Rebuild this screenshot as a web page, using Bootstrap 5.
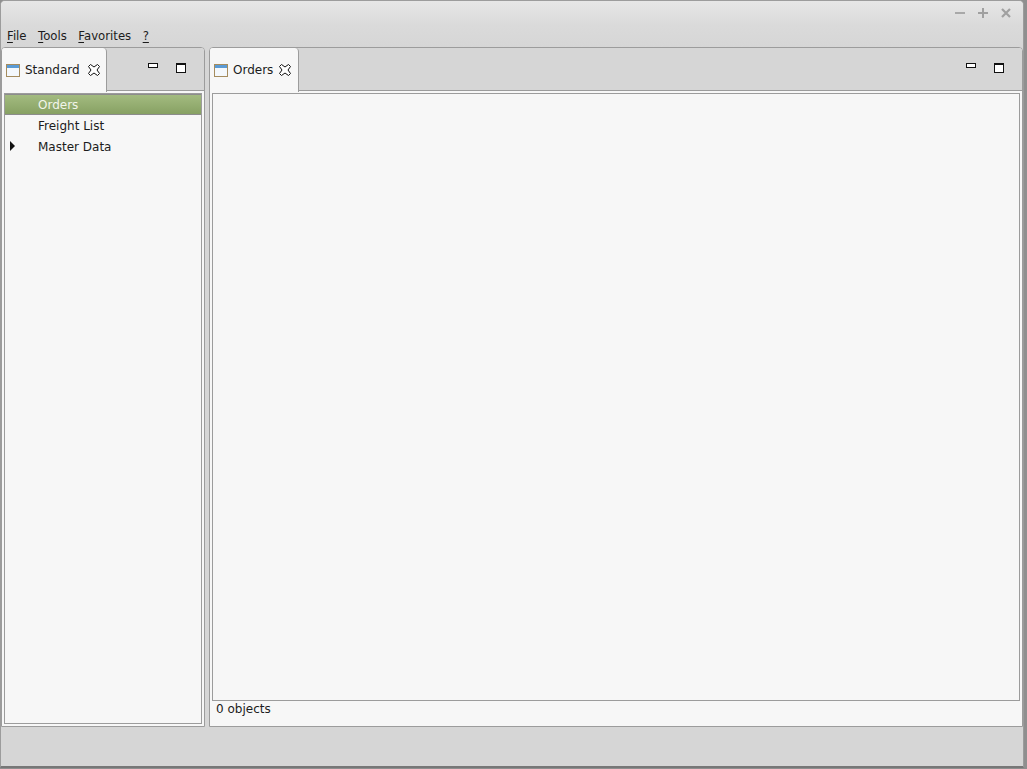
<!DOCTYPE html>
<html lang="en">
<head>
<meta charset="utf-8">
<title>Orders</title>
<link href="https://cdn.jsdelivr.net/npm/bootstrap@5.3.0/dist/css/bootstrap.min.css" rel="stylesheet">
<style>
html,body{height:769px;overflow:hidden}
body{background:#8f8f8f;font-family:"DejaVu Sans",sans-serif;font-size:12px;color:#1c1c1c;line-height:1}
.app-window{width:1024px;height:768px;background:#d6d6d6;border:1px solid #9c9c9c;border-bottom:2px solid #777;border-radius:5px 5px 0 0;overflow:hidden}
.title-strip{height:25px;padding:0 11px 2px 0;gap:11px;background:linear-gradient(#e6e6e6,#dadada)}
.title-strip svg{display:block}
.menu-strip{height:21px;padding:1px 0 0 6px;gap:11.500px;background:linear-gradient(#dadada,#d6d6d6);font-size:11.7px}
.menu-strip u{text-underline-offset:2px}
.work-area{height:680px;gap:4px}
.side-pane{width:204px;flex:none}
.main-pane{width:814px;flex:none}
.pane-box{background:#f7f7f7;border:1px solid #9c9c9c;border-radius:4px 4px 0 0;height:100%;overflow:hidden}
.tab-head{height:43px;background:#d6d6d6;border-bottom:1px solid #9c9c9c}
.tab-item{height:44px;background:#f7f7f7;border-right:1px solid #9c9c9c;border-radius:0 4px 0 0;padding-left:4px;gap:5px}
.tab-item svg{flex:none}
.side-pane .tab-item{width:105px}
.main-pane .tab-item{width:89px}
.tab-close{margin-left:3px}
.main-pane .tab-close{margin-left:1px}
.pane-tools{gap:18px;margin-top:15px}
.side-pane .pane-tools{margin-left:41px}
.main-pane .pane-tools{margin-left:auto;margin-right:18px}
.tool-min{width:10px;height:5px;border:1px solid #111;background:#fff}
.tool-max{width:10px;height:10px;border:1px solid #111;border-top-width:2px;background:#fff}
.tree-box{border:1px solid #9c9c9c;margin:2px 2px 2px 2px;height:632px;background:#f7f7f7}
.tree-row{height:21px;padding-left:33px}
.tree-row.is-selected{background:linear-gradient(#a3bb80,#87a163);color:#f2f5ea;border-top:1px solid #8c8c8c;border-bottom:1px solid #8c8c8c}
.tree-arrow{width:0;height:0;border-left:5px solid #111;border-top:5px solid transparent;border-bottom:5px solid transparent;left:5px;top:5px}
.list-box{border:1px solid #9c9c9c;margin:2px 2px 0 2px;height:608px;background:#f7f7f7}
.object-count{padding:2px 0 0 6px}
</style>
</head>
<body class="m-0">
<div class="app-window d-flex flex-column">
  <div class="title-strip d-flex align-items-center justify-content-end">
    <svg width="12" height="12" viewBox="0 0 12 12"><path d="M1 6h10" stroke="#a8a8a8" stroke-width="2"/></svg>
    <svg width="12" height="12" viewBox="0 0 12 12"><path d="M1 6h10M6 1v10" stroke="#a0a0a0" stroke-width="2"/></svg>
    <svg width="12" height="12" viewBox="0 0 12 12"><path d="M2 2l8 8M10 2l-8 8" stroke="#a0a0a0" stroke-width="2.2"/></svg>
  </div>
  <div class="menu-strip d-flex align-items-center">
    <span><u>F</u>ile</span><span><u>T</u>ools</span><span><u>F</u>avorites</span><span><u>?</u></span>
  </div>
  <div class="work-area d-flex">
    <section class="side-pane">
      <div class="pane-box d-flex flex-column">
        <div class="tab-head d-flex">
          <div class="tab-item d-flex align-items-center align-self-start">
            <svg width="14" height="13" viewBox="0 0 14 13"><rect x=".5" y=".5" width="13" height="12" fill="#f4f8fc" stroke="#a58c5e"/><rect x="1" y="1" width="12" height="3" fill="#5b9bd5"/></svg>
            <span>Standard</span>
            <svg class="tab-close" width="12" height="12" viewBox="0 0 12 12"><path d="M.5 2.500L2.500 .5 6 3 9.500 .5l2 2L9 6l2.500 3.500-2 2L6 9l-3.500 2.500-2-2L3 6z" fill="#fff" stroke="#111"/></svg>
          </div>
          <div class="pane-tools d-flex align-items-start"><div class="tool-min"></div><div class="tool-max"></div></div>
        </div>
        <div class="tree-box">
          <div class="tree-row is-selected d-flex align-items-center">Orders</div>
          <div class="tree-row d-flex align-items-center">Freight List</div>
          <div class="tree-row d-flex align-items-center position-relative"><span class="tree-arrow position-absolute"></span>Master Data</div>
        </div>
      </div>
    </section>
    <section class="main-pane">
      <div class="pane-box d-flex flex-column">
        <div class="tab-head d-flex">
          <div class="tab-item d-flex align-items-center align-self-start">
            <svg width="14" height="13" viewBox="0 0 14 13"><rect x=".5" y=".5" width="13" height="12" fill="#f4f8fc" stroke="#a58c5e"/><rect x="1" y="1" width="12" height="3" fill="#5b9bd5"/></svg>
            <span>Orders</span>
            <svg class="tab-close" width="12" height="12" viewBox="0 0 12 12"><path d="M.5 2.500L2.500 .5 6 3 9.500 .5l2 2L9 6l2.500 3.500-2 2L6 9l-3.500 2.500-2-2L3 6z" fill="#fff" stroke="#111"/></svg>
          </div>
          <div class="pane-tools d-flex align-items-start"><div class="tool-min"></div><div class="tool-max"></div></div>
        </div>
        <div class="list-box"></div>
        <div class="object-count">0 objects</div>
      </div>
    </section>
  </div>
</div>
</body>
</html>
